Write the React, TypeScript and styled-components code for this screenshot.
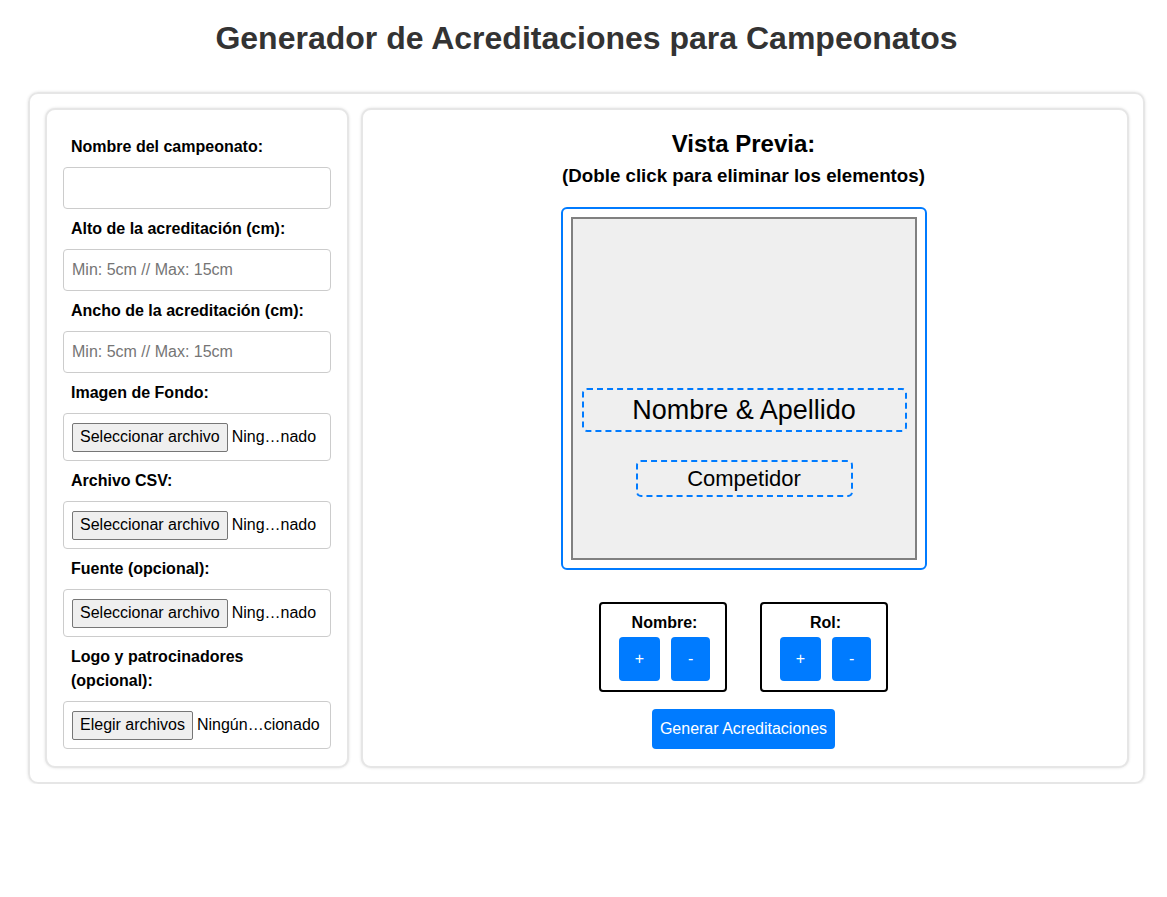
import React from 'react';
import styled, { createGlobalStyle } from 'styled-components';

const GlobalStyle = createGlobalStyle`
  body {
    margin: 0;
    font-family: "Liberation Sans", Arial, sans-serif;
    background: #fff;
    color: #000;
  }
`;

const Page = styled.div`
  padding: 20px 22px 0 28px;
`;

const Title = styled.h1`
  margin: 0 0 35px;
  text-align: center;
  font-size: 32px;
  line-height: 37px;
  font-weight: bold;
  color: #333;
`;

const Container = styled.div`
  display: flex;
  gap: 12px;
  padding: 14px 14px 14px 15px;
  border: 2px solid #e6e6e6;
  border-radius: 10px;
  box-shadow: 0 0 3px rgba(0, 0, 0, 0.12);
`;

const Panel = styled.div`
  border: 2px solid #e6e6e6;
  border-radius: 10px;
  box-shadow: 0 0 3px rgba(0, 0, 0, 0.12);
  background: #fff;
`;

const FormPanel = styled(Panel)`
  width: 304px;
  box-sizing: border-box;
  padding: 17px 16px;
  display: flex;
  flex-direction: column;
`;

const PreviewPanel = styled(Panel)`
  flex: 1;
  padding: 20px 19px 17px 16px;
  display: flex;
  flex-direction: column;
  align-items: center;
`;

const Label = styled.label`
  display: block;
  padding: 0 8px;
  margin: 8px 0 8px;
  font-size: 16px;
  line-height: 24px;
  font-weight: bold;
`;

const TextInput = styled.input`
  box-sizing: border-box;
  width: 100%;
  height: 42px;
  padding: 0 8px;
  border: 1px solid #ccc;
  border-radius: 4px;
  font-family: "Liberation Sans", Arial, sans-serif;
  font-size: 16px;
  color: #000;
  outline: none;

  &::placeholder {
    color: #757575;
  }
`;

const FileBox = styled.div`
  box-sizing: border-box;
  height: 48px;
  padding: 0 8px;
  display: flex;
  align-items: center;
  border: 1px solid #ccc;
  border-radius: 4px;
  font-size: 16px;
  white-space: nowrap;
`;

const FileButton = styled.span`
  box-sizing: border-box;
  height: 29px;
  padding: 0 7px;
  margin-right: 4px;
  display: inline-flex;
  align-items: center;
  background: #efefef;
  border: 1px solid #767676;
  border-radius: 2px;
  color: #000;
`;

const PreviewTitle = styled.h2`
  margin: 0 0 7px;
  font-size: 24px;
  line-height: 28px;
  font-weight: bold;
`;

const PreviewHint = styled.h3`
  margin: 0 0 20px;
  font-size: 18.72px;
  line-height: 22px;
  font-weight: bold;
`;

const PreviewFrame = styled.div`
  width: 366px;
  height: 363px;
  box-sizing: border-box;
  padding: 8px;
  border: 2px solid #007bff;
  border-radius: 6px;
`;

const Canvas = styled.div`
  position: relative;
  height: 100%;
  box-sizing: border-box;
  border: 2px solid #808080;
  background: #efefef;
`;

const Draggable = styled.div<{ $size: number }>`
  position: absolute;
  box-sizing: border-box;
  display: flex;
  align-items: center;
  justify-content: center;
  border: 2px dashed #007bff;
  border-radius: 5px;
  font-size: ${({ $size }) => $size}px;
  color: #000;
  cursor: move;
`;

const Controls = styled.div`
  display: flex;
  gap: 33px;
  margin-top: 32px;
`;

const ControlBox = styled.div`
  box-sizing: border-box;
  width: 128px;
  padding: 10px 15px 9px 18px;
  border: 2px solid #000;
  border-radius: 4px;
  display: flex;
  flex-direction: column;
  align-items: center;
`;

const ControlLabel = styled.div`
  font-size: 16px;
  line-height: 18px;
  font-weight: bold;
  margin-bottom: 5px;
`;

const ButtonRow = styled.div`
  display: flex;
  gap: 11px;
`;

const SmallButton = styled.button`
  height: 44px;
  min-width: 39px;
  padding: 0 16px;
  border: none;
  border-radius: 4px;
  background: #007bff;
  color: #fff;
  font-family: "Liberation Sans", Arial, sans-serif;
  font-size: 16px;
  cursor: pointer;
`;

const GenerateButton = styled.button`
  margin-top: 17px;
  height: 40px;
  padding: 0 8px;
  border: none;
  border-radius: 4px;
  background: #007bff;
  color: #fff;
  font-family: "Liberation Sans", Arial, sans-serif;
  font-size: 16px;
  cursor: pointer;
`;

const fileFields = [
  { label: 'Imagen de Fondo:', button: 'Seleccionar archivo', status: 'Ning…nado' },
  { label: 'Archivo CSV:', button: 'Seleccionar archivo', status: 'Ning…nado' },
  { label: 'Fuente (opcional):', button: 'Seleccionar archivo', status: 'Ning…nado' },
  { label: 'Logo y patrocinadores (opcional):', button: 'Elegir archivos', status: 'Ningún…cionado' },
];

const App = () => {
  return (
    <Page>
      <GlobalStyle />
      <Title>Generador de Acreditaciones para Campeonatos</Title>
      <Container>
        <FormPanel>
          <Label>Nombre del campeonato:</Label>
          <TextInput type="text" />
          <Label>Alto de la acreditación (cm):</Label>
          <TextInput type="number" placeholder="Min: 5cm // Max: 15cm" />
          <Label>Ancho de la acreditación (cm):</Label>
          <TextInput type="number" placeholder="Min: 5cm // Max: 15cm" />
          {fileFields.map((field) => (
            <React.Fragment key={field.label}>
              <Label>{field.label}</Label>
              <FileBox>
                <FileButton>{field.button}</FileButton>
                {field.status}
              </FileBox>
            </React.Fragment>
          ))}
        </FormPanel>
        <PreviewPanel>
          <PreviewTitle>Vista Previa:</PreviewTitle>
          <PreviewHint>(Doble click para eliminar los elementos)</PreviewHint>
          <PreviewFrame>
            <Canvas>
              <Draggable $size={27} style={{ left: 9, top: 169, width: 325, height: 44 }}>
                Nombre &amp; Apellido
              </Draggable>
              <Draggable $size={22} style={{ left: 63, top: 241, width: 217, height: 37 }}>
                Competidor
              </Draggable>
            </Canvas>
          </PreviewFrame>
          <Controls>
            <ControlBox>
              <ControlLabel>Nombre:</ControlLabel>
              <ButtonRow>
                <SmallButton>+</SmallButton>
                <SmallButton>-</SmallButton>
              </ButtonRow>
            </ControlBox>
            <ControlBox>
              <ControlLabel>Rol:</ControlLabel>
              <ButtonRow>
                <SmallButton>+</SmallButton>
                <SmallButton>-</SmallButton>
              </ButtonRow>
            </ControlBox>
          </Controls>
          <GenerateButton>Generar Acreditaciones</GenerateButton>
        </PreviewPanel>
      </Container>
    </Page>
  );
};

export default App;
